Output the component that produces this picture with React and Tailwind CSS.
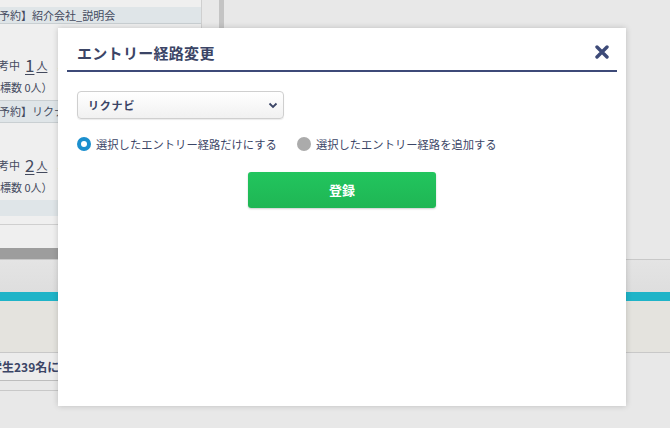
import React from "react";

const font = { fontFamily: '"Noto Sans CJK JP", "Noto Sans", sans-serif' };

function Background() {
  return (
    <div className="w-[670px] h-[428px] bg-[#e8e8e8] flex flex-col overflow-hidden text-[#444a5e]">
      <div className="flex h-[259px] shrink-0">
        <div className="w-[202px] flex flex-col bg-[#efefef] border-r border-[#cfcfcf]">
          <div className="h-[7px]" />
          <div className="h-[17px] bg-[#dfe5e8] flex items-center text-[11px] whitespace-nowrap -ml-[12px] border-b border-[#c9cfd2]">
            【予約】紹介会社_説明会
          </div>
          <div className="h-[76px] flex flex-col justify-end gap-[5px] pb-[5px] text-[11px] whitespace-nowrap">
            <div className="flex items-end gap-[2px] -ml-[2px]">
              <span>考中</span>
              <span className="ml-[3px] text-[17px] leading-[18px] underline underline-offset-2">1</span>
              <span className="underline underline-offset-2">人</span>
              <span className="ml-[8px]">累</span>
            </div>
            <div>標数 0人）</div>
          </div>
          <div className="h-[23px] bg-[#dfe5e8] flex items-center text-[11px] whitespace-nowrap -ml-[12px] border-t border-b border-[#c9cfd2]">
            【予約】リクナビ
          </div>
          <div className="h-[77px] flex flex-col justify-end gap-[5px] pb-[5px] text-[11px] whitespace-nowrap">
            <div className="flex items-end gap-[2px] -ml-[2px]">
              <span>考中</span>
              <span className="ml-[3px] text-[17px] leading-[18px] underline underline-offset-2">2</span>
              <span className="underline underline-offset-2">人</span>
              <span className="ml-[8px]">累</span>
            </div>
            <div>標数 0人）</div>
          </div>
          <div className="h-[16px] bg-[#dfe5e8]" />
          <div className="h-[9px] border-b border-[#cfcfcf]" />
          <div className="flex-1" />
          <div className="h-[11px] bg-[#9d9d9d]" />
        </div>
        <div className="w-[17px]" />
        <div className="w-[5px] bg-[#c4c4c4]" />
        <div className="flex-1" />
      </div>
      <div className="h-[33px] shrink-0 border-t border-[#c8c8c8] bg-gradient-to-b from-[#e4e4e4] to-[#dedede]" />
      <div className="h-[9px] shrink-0 bg-[#1fb4c8]" />
      <div className="h-[52px] shrink-0 bg-[#e4e3de] border-b border-[#c8c8c8]" />
      <div className="w-[200px] h-[28px] shrink-0 bg-[#ececec] border-b border-[#bdbdbd] flex items-center text-[12px] font-bold text-[#3b4566] whitespace-nowrap -ml-[10px]">
        学生239名に一括
      </div>
      <div className="w-[200px] h-[10px] shrink-0 border-b border-[#c8c8c8]" />
    </div>
  );
}

function Modal() {
  return (
    <div className="absolute left-[58px] top-[28px] w-[568px] h-[378px] bg-white shadow-[0_0_6px_rgba(0,0,0,0.18)] px-[9px]">
      <div className="h-[44px] border-b-2 border-[#3d4a78] flex items-center justify-between pl-[10px] pr-[8px]">
        <span className="text-[15px] font-bold text-[#3b4566] tracking-[0.3px] mt-[8px]">エントリー経路変更</span>
        <svg width="14" height="14" viewBox="0 0 14 14" className="mt-[6px]">
          <path d="M2 2 L12 12 M12 2 L2 12" stroke="#3d4a78" strokeWidth="3.4" strokeLinecap="round" />
        </svg>
      </div>
      <div className="pl-[10px] pt-[19px]">
        <div className="w-[207px] h-[28px] rounded-[4px] border border-[#cfcfcf] bg-gradient-to-b from-white to-[#f1f1f1] shadow-[0_1px_1px_rgba(0,0,0,0.08)] flex items-center justify-between pl-[10px] pr-[4px]">
          <span className="text-[11px] font-bold text-[#3b4566] tracking-[0.8px]">リクナビ</span>
          <svg width="12" height="12" viewBox="0 0 12 12">
            <path d="M2.5 4.5 L6 8 L9.5 4.5" fill="none" stroke="#3b4566" strokeWidth="1.8" />
          </svg>
        </div>
        <div className="flex items-center mt-[17px] h-[16px]">
          <span className="w-[14px] h-[14px] rounded-full bg-[#1b8fce] flex items-center justify-center">
            <span className="w-[6px] h-[6px] rounded-full bg-white" />
          </span>
          <span className="ml-[5px] text-[11.3px] text-[#3b4566]">選択したエントリー経路だけにする</span>
          <span className="ml-[20px] w-[14px] h-[14px] rounded-full bg-[#ababab]" />
          <span className="ml-[5px] text-[11.3px] text-[#3b4566]">選択したエントリー経路を追加する</span>
        </div>
        <div className="flex mt-[20px] pl-[171px]">
          <button className="w-[188px] h-[36px] rounded-[3px] bg-gradient-to-b from-[#22c55e] to-[#1fb654] shadow-[0_1px_2px_rgba(0,0,0,0.2)] text-white text-[13px] font-bold">
            登録
          </button>
        </div>
      </div>
    </div>
  );
}

export default function App() {
  return (
    <div className="relative w-[670px] h-[428px] overflow-hidden" style={font}>
      <Background />
      <Modal />
    </div>
  );
}
